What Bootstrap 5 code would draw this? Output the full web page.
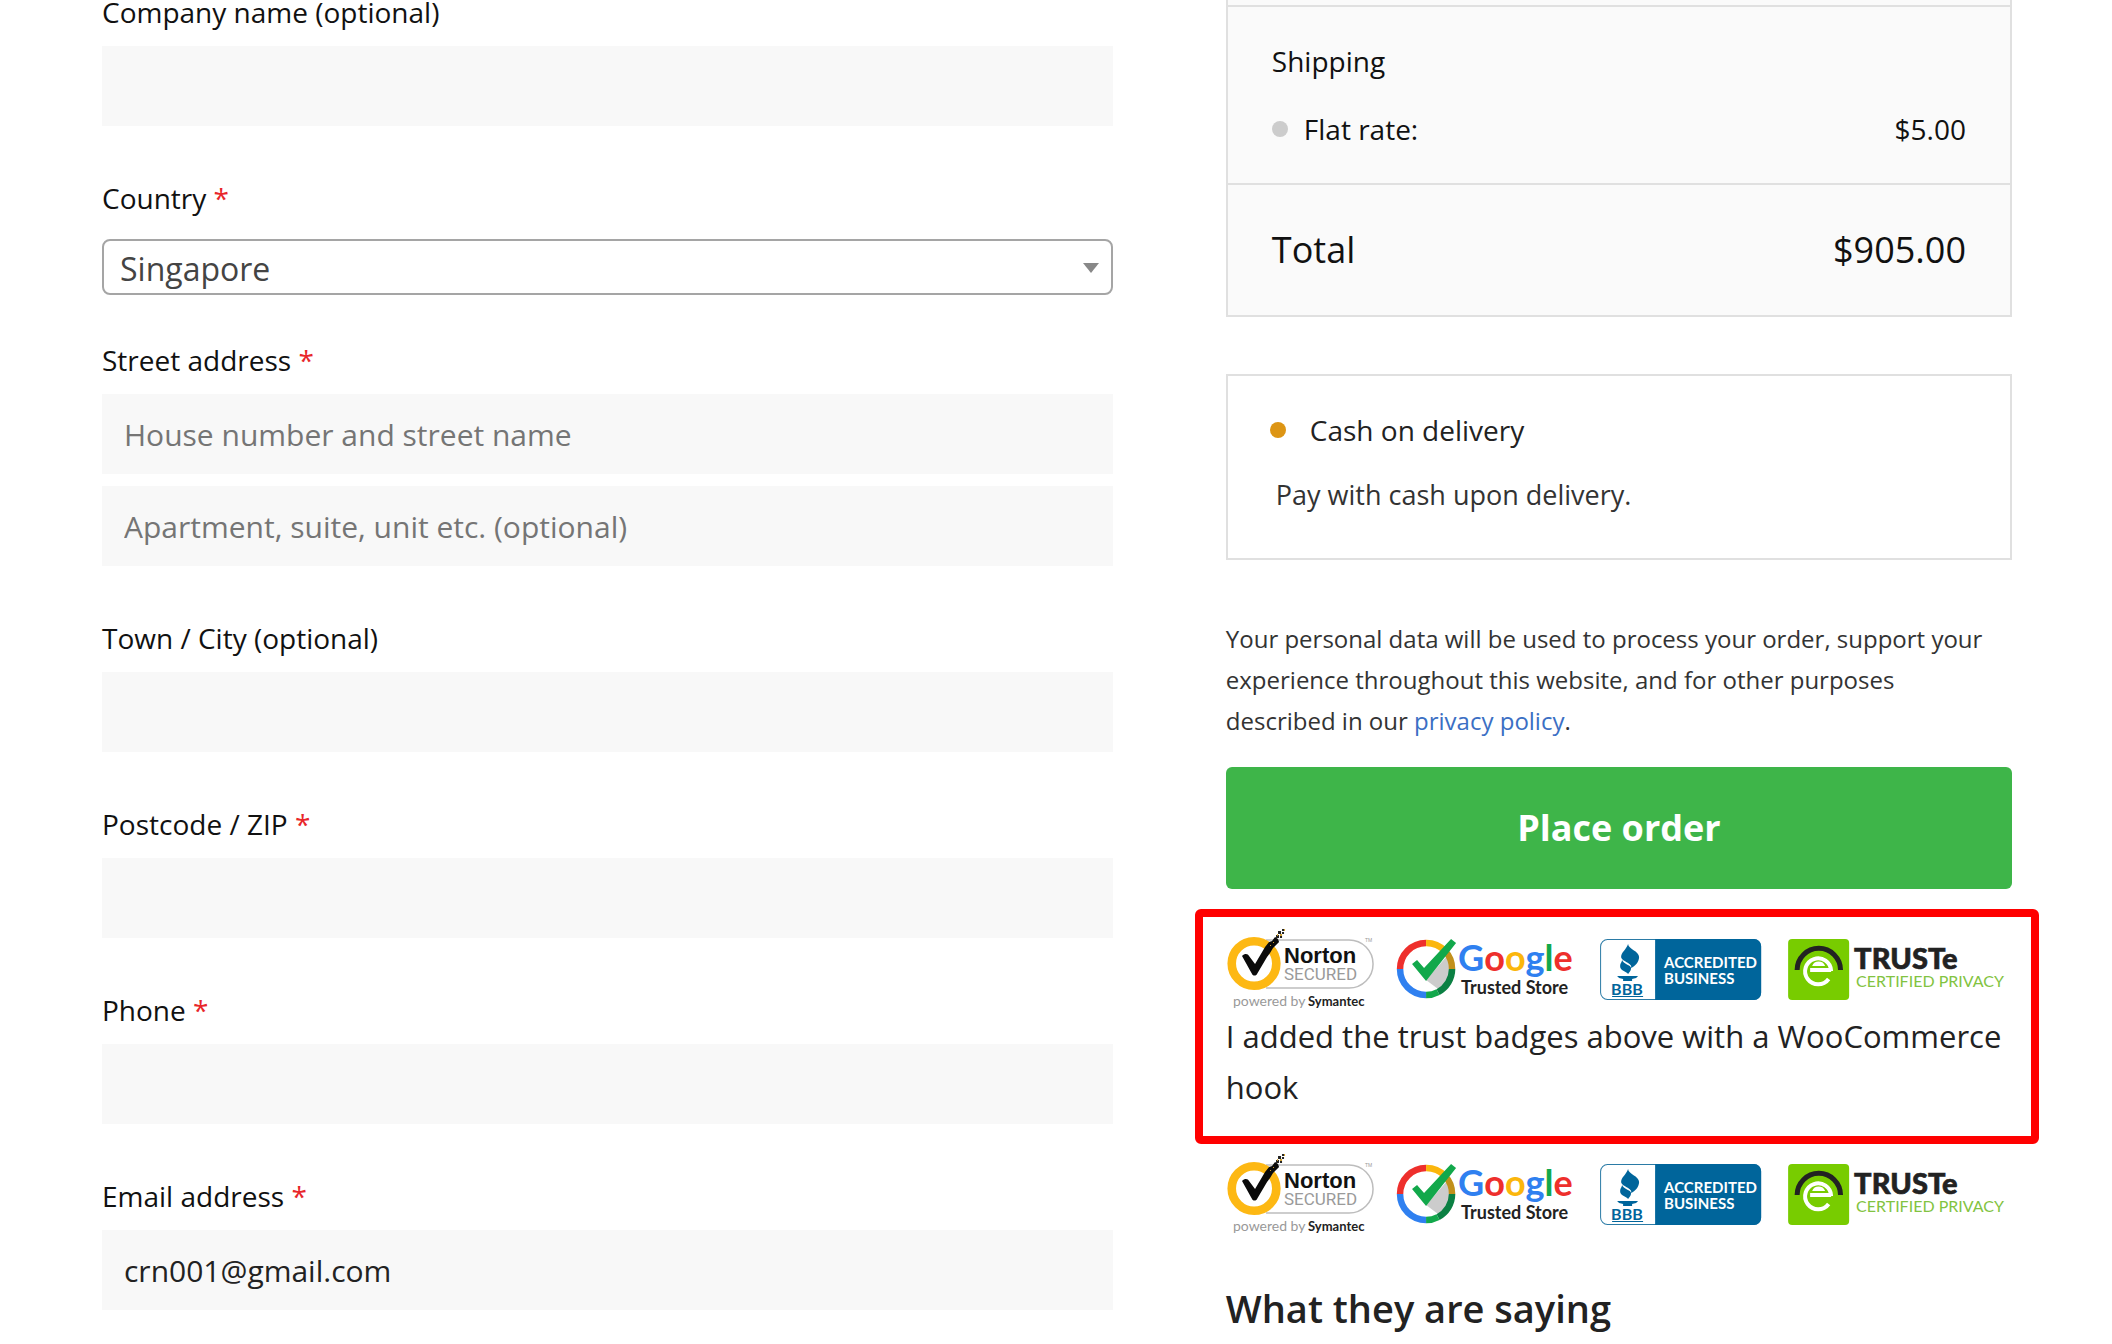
<!DOCTYPE html>
<html lang="en">
<head>
<meta charset="utf-8">
<meta name="viewport" content="width=device-width, initial-scale=1">
<title>Checkout</title>
<link rel="stylesheet" href="https://cdn.jsdelivr.net/npm/bootstrap@5.3.0/dist/css/bootstrap.min.css">
<style>
  body { font-family: "Open Sans", "Noto Sans", sans-serif; color: #222; background: #fff; overflow: hidden; height: 100vh; }
  .checkout { display: grid; grid-template-columns: 9fr 7fr; column-gap: 113px; padding: 0 100px 0 102px; align-items: start; }

  .billing { margin-top: -7px; }
  .field { margin-bottom: 53px; }
  .field-select { margin-bottom: 46px; }
  .field-label { display: block; padding-bottom: 15px; font-size: 28px; line-height: 38px; color: #111; }
  .field-select .field-label { padding-bottom: 22px; }
  .req { color: #e8262a; }
  .input-stack { display: grid; row-gap: 12px; }
  .checkout .form-control { height: 80px; padding: 0 22px; border: 0; border-radius: 0; background: #f8f8f8; font-size: 30px; color: #222; }
  .checkout .form-control::placeholder { color: #757575; }
  .select-wrap { position: relative; }
  .checkout .form-select { height: 56px; padding: 4px 40px 0 16px; border: 2px solid #a5a5a5; border-radius: 8px; background: #fff; font-size: 32px; line-height: 48px; color: #444; }
  .caret { position: absolute; right: 14px; top: 24px; border: 8px solid transparent; border-top: 10px solid #888; border-bottom: 0; pointer-events: none; }

  .totals { border: solid #e0e0e0; border-width: 0 2px 2px; background: #fafafa; padding-top: 5px; color: #111; }
  .totals-part { border-top: 2px solid #e0e0e0; padding: 0 44px; }
  .totals-line { font-size: 28px; line-height: 68px; }
  .totals-ship { padding-top: 20px; padding-bottom: 20px; }
  .totals-sum { font-size: 36px; line-height: 130px; }
  .dot { appearance: none; width: 16px; height: 16px; margin: 0; border-radius: 50%; background: #ccc; flex: none; }
  .dot-on { background: #dd9514; }

  .payment { margin-top: 57px; padding: 21px 42px 31px; border: 2px solid #e0e0e0; }
  .payment-name { font-size: 28px; line-height: 66px; }
  .payment-text { font-size: 27px; line-height: 64px; margin: 0; padding-left: 6px; color: #333; }

  .privacy { margin: 58px 0 26px; padding-right: 16px; font-size: 24px; line-height: 41px; color: #333; }
  .privacy a { color: #3b6fc4; text-decoration: none; }
  .checkout .btn-order { height: 122px; border: 0; border-radius: 6px; background: #3eb549; color: #fff; font-size: 36px; font-weight: 700; }

  .highlight { margin: 20px -27px 0 -31px; padding: 2px 19px 23px 23px; border: 8px solid #f00; border-radius: 6px; }
  .highlight p { margin: 0; font-size: 31px; line-height: 51px; }
  .badges { display: block; width: 100%; height: auto; overflow: visible; }
  .reviews-title { margin: 47px 0 0; font-size: 38px; line-height: 50px; font-weight: 600; }
</style>
</head>
<body>
<main class="checkout">
  <form id="billing" class="billing">
    <div class="field">
      <label class="field-label" for="company">Company name (optional)</label>
      <input class="form-control" id="company" type="text">
    </div>
    <div class="field-select">
      <label class="field-label" for="country">Country <span class="req">*</span></label>
      <div class="select-wrap">
        <select class="form-select" id="country"><option>Singapore</option></select>
        <span class="caret"></span>
      </div>
    </div>
    <div class="field">
      <label class="field-label" for="street">Street address <span class="req">*</span></label>
      <div class="input-stack">
        <input class="form-control" id="street" type="text" placeholder="House number and street name">
        <input class="form-control" type="text" aria-label="Apartment, suite, unit" placeholder="Apartment, suite, unit etc. (optional)">
      </div>
    </div>
    <div class="field">
      <label class="field-label" for="town">Town / City (optional)</label>
      <input class="form-control" id="town" type="text">
    </div>
    <div class="field">
      <label class="field-label" for="zip">Postcode / ZIP <span class="req">*</span></label>
      <input class="form-control" id="zip" type="text">
    </div>
    <div class="field">
      <label class="field-label" for="phone">Phone <span class="req">*</span></label>
      <input class="form-control" id="phone" type="tel">
    </div>
    <div>
      <label class="field-label" for="email">Email address <span class="req">*</span></label>
      <input class="form-control" id="email" type="email" value="crn001@gmail.com">
    </div>
  </form>

  <section>
    <div class="totals">
      <div class="totals-part totals-ship">
        <div class="totals-line">Shipping</div>
        <div class="totals-line d-flex align-items-center">
          <input class="dot me-3" type="radio" name="shipping" id="flat">
          <label for="flat">Flat rate:</label>
          <span class="ms-auto">$5.00</span>
        </div>
      </div>
      <div class="totals-part totals-sum d-flex justify-content-between">
        <span>Total</span><span>$905.00</span>
      </div>
    </div>

    <div class="payment">
      <div class="payment-name d-flex align-items-center gap-4">
        <input class="dot dot-on" type="radio" name="payment" id="cod" checked>
        <label for="cod">Cash on delivery</label>
      </div>
      <p class="payment-text">Pay with cash upon delivery.</p>
    </div>

    <p class="privacy">Your personal data will be used to process your order, support your experience throughout this website, and for other purposes described in our <a href="#">privacy policy</a>.</p>
    <button class="btn btn-order w-100" type="submit" form="billing">Place order</button>

    <div class="highlight">
      <svg class="badges" viewBox="0 0 786 92" role="img" aria-label="Trust badges">
        <g id="trust">
          <!-- Norton -->
          <path d="M40 21H123a24 24 0 0 1 0 48H40" fill="#fff" stroke="#bdbdbd" stroke-width="1.5"/>
          <circle cx="28" cy="44.500" r="22.300" fill="#fff" stroke="#fdb813" stroke-width="8.600"/>
          <path d="M16 37c3-3 6-2 7 0l6 8L39 28l4-5 3-1 3-4 3 2 1 3-3 3-3 3-3 5-3 4-10 17c-1 2-4 2-5 0z" fill="#0a0a0a"/>
          <path d="M50 16h3v3h-3zM54 17h2v2h-2zM52 12h3v3h-3zM56 13h2v2h-2zM56 10h2v2h-2z" fill="#222"/>
          <path d="M54 15h2v2h-2zM58 10h1v2h-1zM51 15h1v2h-1zM44 26h1v1h-1zM47 23h1v1h-1z" fill="#d0a030"/>
          <text x="58" y="44" font-family="Liberation Sans, sans-serif" font-weight="700" font-size="22" fill="#111">Norton</text>
          <text x="58" y="61" font-family="Roboto, sans-serif" font-size="17" fill="#9a9a9a">SECURED</text>
          <text x="139" y="23" font-family="Liberation Sans, sans-serif" font-size="5" fill="#999">TM</text>
          <text x="7" y="87" font-family="Lato, sans-serif" font-size="14" fill="#999">powered by</text>
          <text x="82" y="87" font-family="Lato, sans-serif" font-weight="700" font-size="13" fill="#222">Symantec</text>

          <!-- Google Trusted Store -->
          <path d="M200 61l21-24a24 24 0 0 1-9 33z" fill="#ccc"/>
          <g fill="none" stroke-width="6.500">
            <path d="M174 50a26 26 0 0 1 26-26" stroke="#ee2f2c"/>
            <path d="M200 24a26 26 0 0 1 19 8" stroke="#fbb60c"/>
            <path d="M219 32a26 26 0 0 1 7 18" stroke="#c2901b"/>
            <path d="M226 50a26 26 0 0 1-14 23" stroke="#0b8043"/>
            <path d="M212 73a26 26 0 0 1-12 3" stroke="#12a84b"/>
            <path d="M200 76a26 26 0 0 1-26-26" stroke="#2f80f0"/>
          </g>
          <path d="M186 45l5-4 7 8 27-29 5 4-30 38z" fill="#12a84b"/>
          <text x="232" y="52" font-family="Lato, sans-serif" font-weight="700" font-size="36" fill="#2f80f0">G<tspan fill="#ee2f2c">o</tspan><tspan fill="#fbb60c">o</tspan><tspan>g</tspan><tspan fill="#12a84b">l</tspan><tspan fill="#ee2f2c">e</tspan></text>
          <text x="235" y="75" font-family="Lato, sans-serif" font-weight="700" font-size="18" fill="#222">Trusted Store</text>

          <!-- BBB -->
          <rect x="374.500" y="20.500" width="160" height="60" rx="7" fill="#fff" stroke="#2b7ba6"/>
          <path d="M429 20h99a7 7 0 0 1 7 7v47a7 7 0 0 1-7 7h-99z" fill="#00659b"/>
          <path d="M402 25c0 5 11 7 11 13 0 5-4 9-8 11 2-5-9-6-10-11 0-5 5-7 7-13zM396 41c1 4 9 5 9 8 0 3-2 4-3 6-2-3-8-3-8-8 0-3 2-4 2-6zM391 57h21l-2 2-4 1v2h-9v-2l-4-1z" fill="#00659b"/>
          <text x="385" y="76" font-family="Lato, sans-serif" font-weight="700" font-size="16" fill="#00659b">BBB</text>
          <path d="M386 77.500h31" stroke="#00659b"/>
          <text x="438" y="49" font-family="Lato, sans-serif" font-weight="700" font-size="15" fill="#fff">ACCREDITED</text>
          <text x="438" y="65" font-family="Lato, sans-serif" font-weight="700" font-size="15" fill="#fff">BUSINESS</text>

          <!-- TRUSTe -->
          <rect x="562" y="20" width="61" height="61" rx="4" fill="#78cc00"/>
          <path d="M571 51a21.700 21.700 0 0 1 43.400 0" fill="none" stroke="#222" stroke-width="5"/>
          <path d="M602.500 60a13 13 0 1 1 2.500-8" fill="none" stroke="#fff" stroke-width="4"/>
          <path d="M584 49h21v4h-21zM586 47a7 7 0 0 1 13 0z" fill="#fff"/>
          <text x="628" y="50" font-family="Lato, sans-serif" font-weight="900" font-size="29" fill="#222" stroke="#222" stroke-width=".6">TRUSTe</text>
          <text x="630" y="68" font-family="Lato, sans-serif" font-size="16" fill="#82c341">CERTIFIED PRIVACY</text>
        </g>
      </svg>
      <p>I added the trust badges above with a WooCommerce hook</p>
    </div>
    <svg class="badges" viewBox="0 0 786 92" role="img" aria-label="Trust badges"><use href="#trust"/></svg>
    <h2 class="reviews-title">What they are saying</h2>
  </section>
</main>
<script src="https://cdn.jsdelivr.net/npm/bootstrap@5.3.0/dist/js/bootstrap.bundle.min.js"></script>
</body>
</html>
